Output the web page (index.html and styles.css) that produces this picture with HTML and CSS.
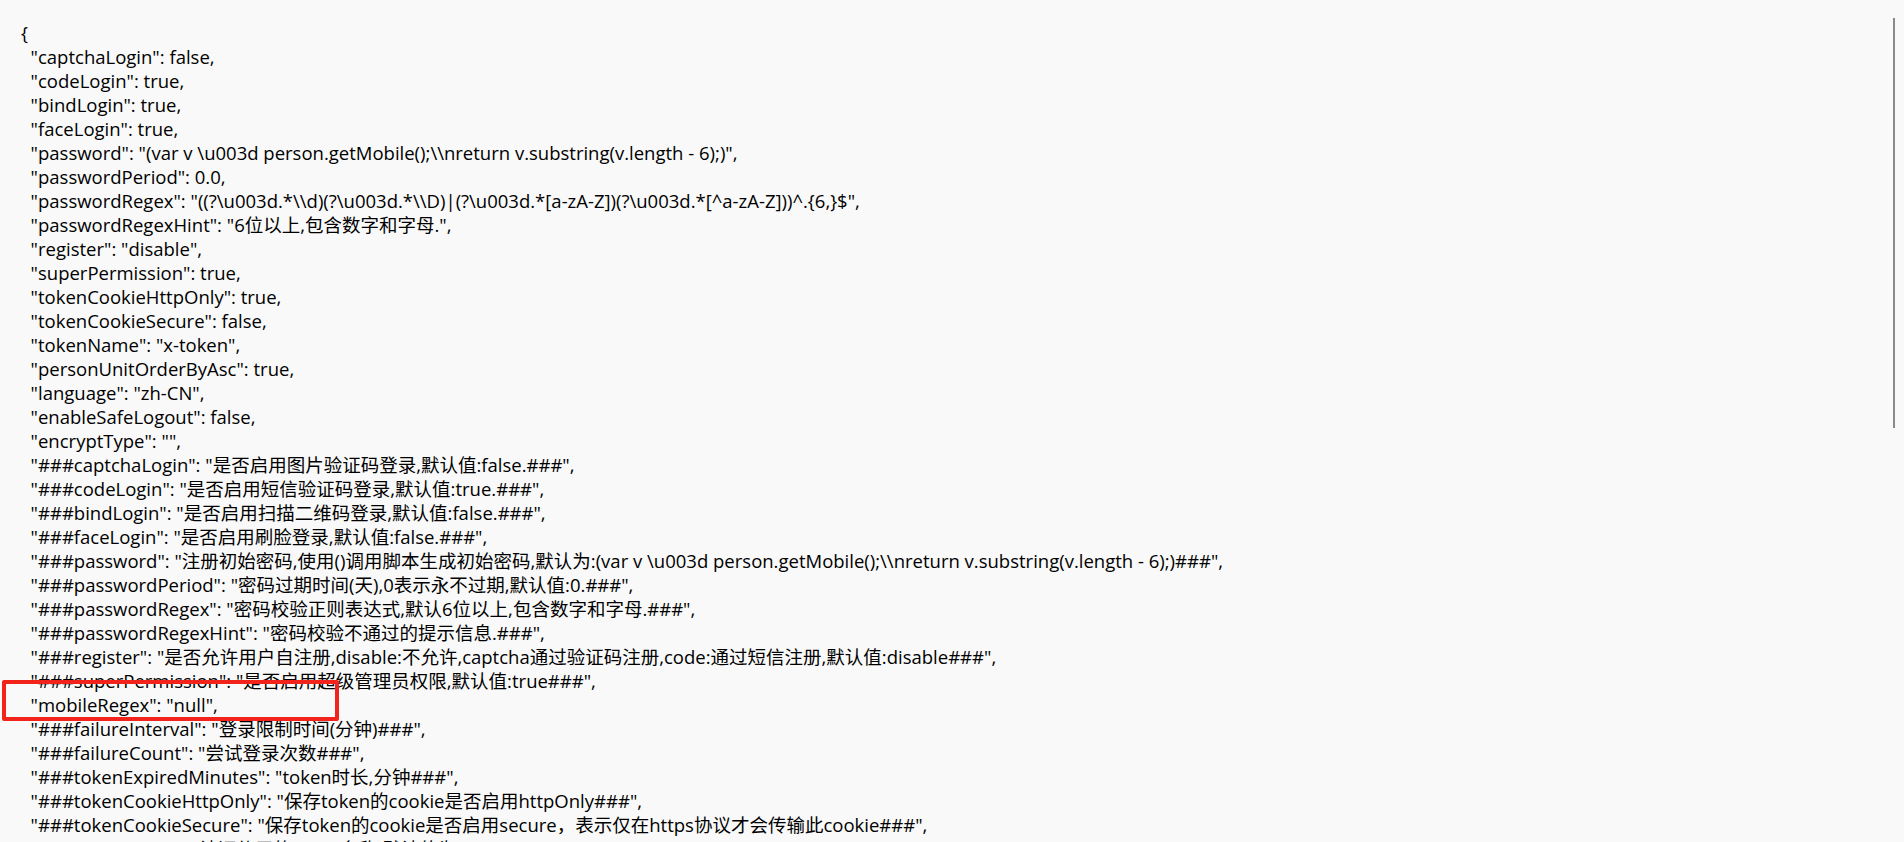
FILE: index.html
```html
<!DOCTYPE html>
<html lang="zh-CN">
<head>
  <meta charset="UTF-8">
  <title>person.json</title>
  <link rel="stylesheet" href="styles.css">
</head>
<body>
  <div class="viewer">
<pre class="raw">{
  "captchaLogin": false,
  "codeLogin": true,
  "bindLogin": true,
  "faceLogin": true,
  "password": "(var v \u003d person.getMobile();\\nreturn v.substring(v.length - 6);)",
  "passwordPeriod": 0.0,
  "passwordRegex": "((?\u003d.*\\d)(?\u003d.*\\D)|(?\u003d.*[a-zA-Z])(?\u003d.*[^a-zA-Z]))^.{6,}$",
  "passwordRegexHint": "6位以上,包含数字和字母.",
  "register": "disable",
  "superPermission": true,
  "tokenCookieHttpOnly": true,
  "tokenCookieSecure": false,
  "tokenName": "x-token",
  "personUnitOrderByAsc": true,
  "language": "zh-CN",
  "enableSafeLogout": false,
  "encryptType": "",
  "###captchaLogin": "是否启用图片验证码登录,默认值:false.###",
  "###codeLogin": "是否启用短信验证码登录,默认值:true.###",
  "###bindLogin": "是否启用扫描二维码登录,默认值:false.###",
  "###faceLogin": "是否启用刷脸登录,默认值:false.###",
  "###password": "注册初始密码,使用()调用脚本生成初始密码,默认为:(var v \u003d person.getMobile();\\nreturn v.substring(v.length - 6);)###",
  "###passwordPeriod": "密码过期时间(天),0表示永不过期,默认值:0.###",
  "###passwordRegex": "密码校验正则表达式,默认6位以上,包含数字和字母.###",
  "###passwordRegexHint": "密码校验不通过的提示信息.###",
  "###register": "是否允许用户自注册,disable:不允许,captcha通过验证码注册,code:通过短信注册,默认值:disable###",
  "###superPermission": "是否启用超级管理员权限,默认值:true###",
  "mobileRegex": "null",
  "###failureInterval": "登录限制时间(分钟)###",
  "###failureCount": "尝试登录次数###",
  "###tokenExpiredMinutes": "token时长,分钟###",
  "###tokenCookieHttpOnly": "保存token的cookie是否启用httpOnly###",
  "###tokenCookieSecure": "保存token的cookie是否启用secure，表示仅在https协议才会传输此cookie###",
  "###tokenName": "认证使用的token名称,默认值为x-token###"
}</pre>
    <div class="highlight"></div>
    <div class="scrollbar"></div>
  </div>
</body>
</html>
```

FILE: styles.css
```css
html, body {
  margin: 0;
  padding: 0;
  height: 100%;
  overflow: hidden;
  background: #f9f9f9;
  color: #000;
}

.viewer {
  position: relative;
  height: 100%;
  padding: 21px 0 0 21px;
  box-sizing: border-box;
  overflow: hidden;
}

.raw {
  margin: 0;
  font-family: "Open Sans", "Noto Sans CJK SC", sans-serif;
  font-size: 18.5px;
  line-height: 24px;
  white-space: pre;
}

/* red annotation box around mobileRegex */
.highlight {
  position: absolute;
  left: 2px;
  top: 680px;
  width: 337px;
  height: 41px;
  box-sizing: border-box;
  border: 4px solid #f2231a;
  border-radius: 2px;
}

.scrollbar {
  position: absolute;
  left: 1893px;
  top: 18px;
  width: 2px;
  height: 410px;
  background: #8a8a8a;
}
```
